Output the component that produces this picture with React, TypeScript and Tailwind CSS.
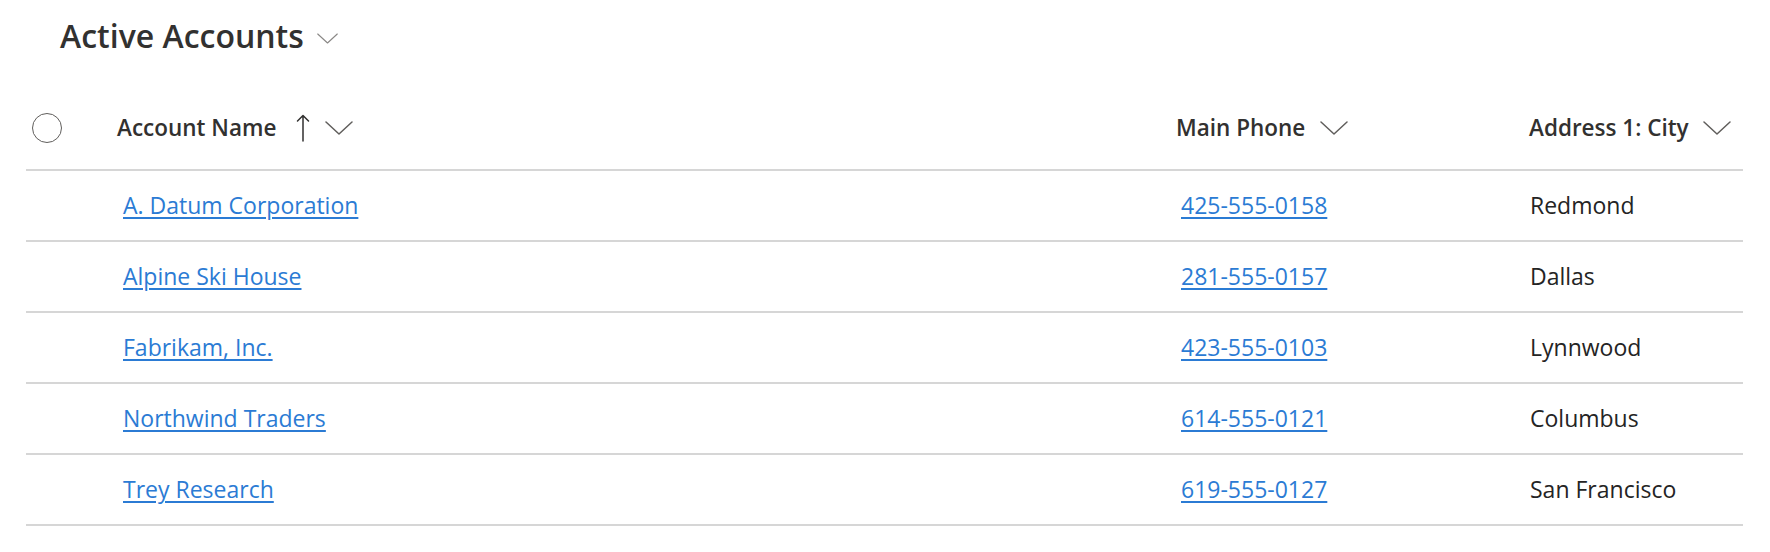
import { ReactNode } from 'react';

interface Account {
  name: string;
  phone: string;
  city: string;
}

const accounts: Account[] = [
  { name: 'A. Datum Corporation', phone: '425-555-0158', city: 'Redmond' },
  { name: 'Alpine Ski House', phone: '281-555-0157', city: 'Dallas' },
  { name: 'Fabrikam, Inc.', phone: '423-555-0103', city: 'Lynnwood' },
  { name: 'Northwind Traders', phone: '614-555-0121', city: 'Columbus' },
  { name: 'Trey Research', phone: '619-555-0127', city: 'San Francisco' },
];

function Chevron({ className = '' }: { className?: string }) {
  return (
    <svg viewBox="0 0 28 14" fill="none" className={className}>
      <path d="M1 1 L14 13 L27 1" stroke="currentColor" strokeWidth="1.5" strokeLinecap="round" strokeLinejoin="round" />
    </svg>
  );
}

function UpArrow() {
  return (
    <svg viewBox="0 0 14 28" fill="none" className="w-[14px] h-[28px] text-[#323130]">
      <path d="M7 27 L7 1.5 M1.5 7 L7 1.5 L12.5 7" stroke="currentColor" strokeWidth="1.5" strokeLinecap="round" strokeLinejoin="round" />
    </svg>
  );
}

function HeaderCell({ children }: { children: ReactNode }) {
  return <span className="text-[22.5px] font-semibold text-[#323130] whitespace-nowrap">{children}</span>;
}

function LinkText({ children }: { children: ReactNode }) {
  return (
    <a
      href="#"
      className="text-[23px] text-[#2b7bd4] underline decoration-[1.5px] underline-offset-[3px] whitespace-nowrap"
    >
      {children}
    </a>
  );
}

export default function App() {
  return (
    <div className="w-[1770px] h-[552px] bg-white overflow-hidden" style={{ fontFamily: '"Open Sans", "Noto Sans", sans-serif' }}>
      {/* view title */}
      <div className="h-[72px] flex items-center pl-[60px] gap-[13px]">
        <h1 className="text-[32px] font-semibold text-[#323130] leading-none">Active Accounts</h1>
        <Chevron className="w-[21px] h-[11px] text-[#8a8886] mt-[4px]" />
      </div>

      <div className="ml-[26px] w-[1717px]">
        {/* header row */}
        <div className="h-[99px] pt-[14px] flex items-center border-b-2 border-[#d6d6d6]">
          <div className="w-[91px] flex items-center">
            <span className="ml-[6px] w-[30px] h-[30px] rounded-full border-[1.5px] border-[#605e5c]" />
          </div>
          <div className="w-[1059px] flex items-center">
            <HeaderCell>Account Name</HeaderCell>
            <span className="ml-[20px] flex items-center"><UpArrow /></span>
            <Chevron className="ml-[15px] w-[28px] h-[14px] text-[#605e5c]" />
          </div>
          <div className="w-[353px] flex items-center">
            <HeaderCell>Main Phone</HeaderCell>
            <Chevron className="ml-[15px] w-[28px] h-[14px] text-[#605e5c]" />
          </div>
          <div className="flex-1 flex items-center">
            <HeaderCell>Address 1: City</HeaderCell>
            <Chevron className="ml-[14px] w-[28px] h-[14px] text-[#605e5c]" />
          </div>
        </div>

        {/* data rows */}
        {accounts.map((a) => (
          <div key={a.name} className="h-[71px] flex items-center border-b-2 border-[#d6d6d6]">
            <div className="w-[91px]" />
            <div className="w-[1059px] pl-[6px]">
              <LinkText>{a.name}</LinkText>
            </div>
            <div className="w-[353px] pl-[5px]">
              <LinkText>{a.phone}</LinkText>
            </div>
            <div className="flex-1 pl-[1px] text-[23px] text-[#242424] whitespace-nowrap">{a.city}</div>
          </div>
        ))}
      </div>
    </div>
  );
}
